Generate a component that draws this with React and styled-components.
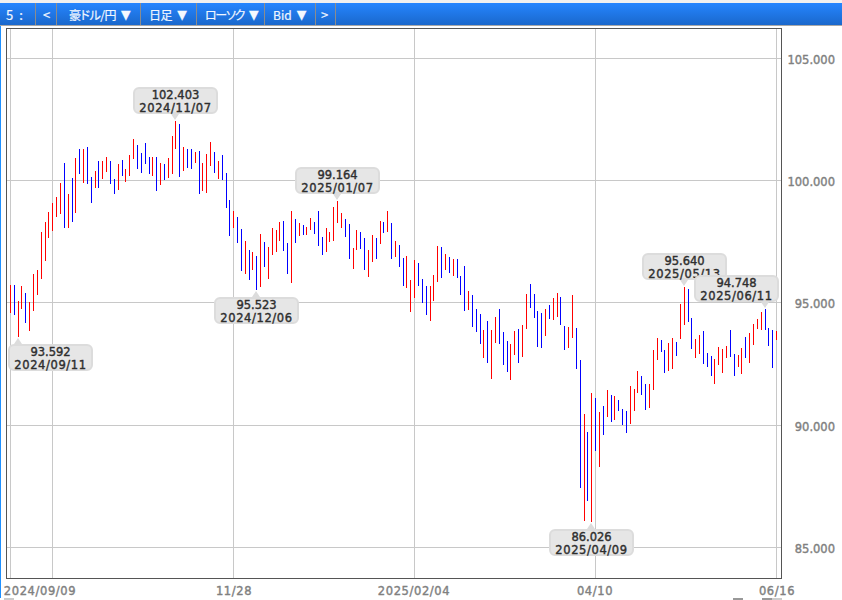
import React from "react";
import styled, { createGlobalStyle } from "styled-components";

const GlobalStyle = createGlobalStyle`
  html, body {
    margin: 0;
    padding: 0;
    background: #fff;
    overflow: hidden;
  }
`;

// x, high (top px), low (bottom px), r/b
const bars = [
  [10,285,313,"r"],[14,285,315,"b"],[18,301,337,"r"],[21,286,309,"r"],[25,293,323,"b"],[29,302,331,"r"],
  [33,274,311,"r"],[37,270,295,"r"],[41,232,279,"r"],[45,222,261,"r"],[48,212,238,"r"],[52,203,231,"r"],
  [56,197,217,"r"],[60,183,214,"r"],[64,163,228,"b"],[68,194,228,"r"],[72,178,222,"b"],[75,158,213,"r"],
  [79,149,174,"b"],[83,149,183,"r"],[87,147,184,"b"],[91,177,203,"b"],[95,171,188,"r"],[98,161,188,"b"],
  [102,161,179,"r"],[106,157,172,"r"],[110,161,184,"b"],[114,179,194,"b"],[118,164,190,"r"],[122,160,176,"b"],
  [125,169,182,"r"],[129,155,176,"r"],[133,139,159,"r"],[137,145,169,"b"],[141,153,173,"b"],[145,143,164,"b"],
  [149,157,174,"b"],[152,157,176,"r"],[156,157,191,"b"],[160,163,185,"r"],[164,164,180,"b"],[168,158,178,"r"],
  [172,136,174,"r"],[175,121,149,"r"],[179,124,177,"b"],[183,147,171,"r"],[187,149,168,"b"],[191,149,169,"b"],
  [195,152,163,"r"],[199,151,194,"b"],[202,163,191,"r"],[206,154,193,"r"],[210,142,166,"r"],[214,152,173,"b"],
  [218,161,179,"r"],[222,155,180,"b"],[226,173,208,"b"],[229,200,236,"b"],[233,211,228,"r"],[237,217,243,"b"],
  [241,229,271,"b"],[245,241,274,"r"],[249,250,280,"b"],[252,252,270,"r"],[256,256,290,"b"],[260,234,287,"r"],
  [264,242,267,"b"],[268,247,279,"r"],[272,228,255,"r"],[276,230,252,"r"],[279,222,241,"r"],[283,221,251,"b"],
  [287,243,274,"b"],[291,211,283,"r"],[295,219,243,"b"],[299,223,236,"r"],[303,225,235,"b"],[306,227,235,"r"],
  [310,218,230,"r"],[314,222,234,"b"],[318,211,246,"b"],[322,237,255,"b"],[326,228,252,"r"],[329,232,242,"r"],
  [333,207,241,"r"],[337,201,223,"r"],[341,213,228,"r"],[345,219,237,"b"],[349,224,259,"b"],[353,248,269,"r"],
  [356,230,250,"r"],[360,232,249,"b"],[364,238,270,"b"],[368,250,277,"r"],[372,235,262,"r"],[376,238,259,"b"],
  [380,221,244,"r"],[383,222,233,"b"],[387,211,232,"r"],[391,223,259,"b"],[395,241,257,"r"],[399,245,267,"b"],
  [403,258,286,"b"],[406,256,288,"r"],[410,280,312,"r"],[414,260,298,"r"],[418,263,286,"b"],[422,279,303,"b"],
  [426,286,315,"b"],[430,286,321,"r"],[433,275,301,"r"],[437,246,282,"r"],[441,247,278,"b"],[445,254,270,"r"],
  [449,257,273,"b"],[453,259,276,"r"],[457,259,278,"b"],[460,276,295,"b"],[464,266,311,"b"],[468,291,310,"r"],
  [472,295,327,"b"],[476,309,332,"b"],[480,314,344,"b"],[483,330,358,"r"],[487,321,363,"b"],[491,330,379,"r"],
  [495,317,343,"r"],[499,309,344,"b"],[503,332,365,"b"],[507,341,372,"b"],[510,344,380,"r"],[514,331,355,"r"],
  [518,329,363,"b"],[522,325,357,"r"],[526,294,329,"r"],[530,284,308,"b"],[534,294,318,"b"],[537,311,347,"b"],
  [541,313,348,"b"],[545,309,336,"r"],[549,305,319,"b"],[553,298,320,"r"],[557,293,317,"r"],[560,297,325,"b"],
  [564,326,350,"b"],[568,327,348,"r"],[572,295,338,"r"],[576,328,369,"b"],[580,360,488,"b"],[584,414,521,"r"],
  [587,432,501,"b"],[591,393,522,"r"],[595,398,451,"b"],[599,412,467,"r"],[603,406,435,"b"],[607,390,417,"r"],
  [611,395,422,"b"],[614,396,420,"r"],[618,400,411,"b"],[622,409,425,"b"],[626,411,433,"b"],[630,386,424,"r"],
  [634,389,411,"r"],[637,371,393,"r"],[641,376,395,"b"],[645,384,410,"b"],[649,384,408,"r"],[653,350,390,"r"],
  [657,338,360,"r"],[661,340,352,"b"],[664,350,373,"b"],[668,343,371,"r"],[672,338,369,"r"],[676,342,356,"b"],
  [680,304,339,"r"],[684,287,325,"r"],[688,289,322,"b"],[691,318,349,"b"],[695,339,358,"r"],[699,335,354,"r"],
  [703,331,364,"b"],[707,353,367,"b"],[711,356,376,"b"],[714,359,384,"r"],[718,347,365,"r"],[722,349,373,"r"],
  [726,346,358,"r"],[730,330,357,"b"],[734,354,376,"b"],[738,355,367,"r"],[741,348,374,"r"],[745,337,358,"b"],
  [749,333,363,"r"],[753,324,345,"r"],[757,319,329,"r"],[761,312,330,"r"],[765,309,330,"b"],[768,328,346,"b"],
  [772,330,368,"b"],[776,331,340,"r"],
];

const gridX = [10, 52, 233, 414, 595, 776];
const priceTicks = [
  { y: 58, label: "105.000" },
  { y: 180, label: "100.000" },
  { y: 302, label: "95.000" },
  { y: 425, label: "90.000" },
  { y: 547, label: "85.000" },
];
const dateTicks = [
  { x: 40, label: "2024/09/09" },
  { x: 234, label: "11/28" },
  { x: 414, label: "2025/02/04" },
  { x: 595, label: "04/10" },
  { x: 777, label: "06/16" },
];
const callouts = [
  { x: 133, y: 87, tip: 42, dir: "down", price: "102.403", date: "2024/11/07" },
  { x: 8, y: 344, tip: 10, dir: "up", price: "93.592", date: "2024/09/11" },
  { x: 214, y: 297, tip: 42, dir: "up", price: "95.523", date: "2024/12/06" },
  { x: 295, y: 167, tip: 42, dir: "down", price: "99.164", date: "2025/01/07" },
  { x: 549, y: 529, tip: 42, dir: "up", price: "86.026", date: "2025/04/09" },
  { x: 642, y: 253, tip: 42, dir: "down", price: "95.640", date: "2025/05/13" },
  { x: 694, y: 275, tip: 71, dir: "down", price: "94.748", date: "2025/06/11" },
];
const menu = [
  { w: 36, text: "5 :", pad: 6, track: 1.6, size: 13 },
  { w: 21, text: "<", pad: 7, size: 13 },
  { w: 84, text: "豪ドル/円", caret: true, pad: 12, track: -0.5 },
  { w: 56, text: "日足", caret: true, pad: 8, track: -0.4 },
  { w: 68, text: "ローソク", caret: true, pad: 8, track: -1.3 },
  { w: 51, text: "Bid", caret: true, pad: 8 },
  { w: 20, text: ">", pad: 5, size: 13 },
];

const Page = styled.div`
  width: 842px;
  height: 600px;
  overflow: hidden;
  padding-top: 3px;
  box-sizing: border-box;
  background: linear-gradient(#f0f0f0 3px, #fff 3px);
`;

const Toolbar = styled.div`
  display: flex;
  height: 22px;
  background: linear-gradient(#2585ff, #1a68cc);
  border-bottom: 1px solid #a8a8a8;
`;

const MenuCell = styled.div`
  display: flex;
  align-items: center;
  gap: 5px;
  box-sizing: border-box;
  width: ${(p) => p.$w}px;
  padding-left: ${(p) => p.$pad}px;
  border-right: 1px solid #8c8c8c;
  color: #f0f6ff;
  font: ${(p) => p.$size || 12}px "Noto Sans CJK JP", "Noto Sans", sans-serif;
  font-feature-settings: "palt";
  letter-spacing: ${(p) => p.$track || 0}px;
  -webkit-text-stroke: 0.2px #f0f6ff;
  white-space: nowrap;
`;

const Caret = styled.span`
  font: 12.5px "DejaVu Sans", sans-serif;
  letter-spacing: 0;
  color: #f4f8ff;
`;

const ChartArea = styled.div`
  position: relative;
  height: 572px;
  border-left: 1px solid #1e90ff;
`;

const ChartSvg = styled.svg`
  display: block;
`;

const AxisText = styled.text`
  font: 11.5px "DejaVu Sans", sans-serif;
  letter-spacing: ${(p) => (p.$date ? "0.6px" : "0")};
  fill: #808080;
  stroke: #808080;
  stroke-width: 0.4px;
`;

const Callout = styled.div`
  position: absolute;
  left: ${(p) => p.$x - 1}px;
  top: ${(p) => p.$y - 26}px;
  box-sizing: border-box;
  width: 85px;
  height: 27px;
  padding-top: 2px;
  display: flex;
  flex-direction: column;
  align-items: center;
  justify-content: center;
  background: #e6e6e6;
  border: 2px solid #dcdcdc;
  border-radius: 6px;
  color: #2e2e2e;
  font: 11.5px/12.5px "DejaVu Sans", sans-serif;
  -webkit-text-stroke: 0.4px #2e2e2e;

  &::after {
    content: "";
    position: absolute;
    left: ${(p) => p.$tip - 6}px;
    ${(p) => (p.$dir === "down" ? "top: 25px;" : "bottom: 25px;")}
    border-left: 4px solid transparent;
    border-right: 4px solid transparent;
    ${(p) =>
      p.$dir === "down"
        ? "border-top: 6px solid #dcdcdc;"
        : "border-bottom: 6px solid #dcdcdc;"}
  }
`;

const CalloutDate = styled.span`
  letter-spacing: 0.6px;
  white-space: nowrap;
`;

const FooterMarks = styled.div`
  display: flex;
  height: 2px;
  padding: 0 60px 0 4px;
`;

const Mark = styled.div`
  width: 10px;
  margin-left: ${(p) => p.$gap || 0}px;
  background: ${(p) => p.$tone};
`;

const PriceChart = () => (
  <ChartSvg width="841" height="572" viewBox="1 26 841 572">
    {priceTicks.map((t) => (
      <line key={t.y} x1="7" x2="782" y1={t.y + 0.5} y2={t.y + 0.5} stroke="#c8c8c8" />
    ))}
    {gridX.map((x) => (
      <line key={x} x1={x + 0.5} x2={x + 0.5} y1="29" y2="578" stroke="#c8c8c8" />
    ))}
    <rect x="6.5" y="28.5" width="775" height="550" fill="none" stroke="#555" />
    {bars.map(([x, top, bottom, dir]) => (
      <line
        key={x}
        x1={x + 0.5}
        x2={x + 0.5}
        y1={top}
        y2={bottom}
        stroke={dir === "r" ? "#ff0000" : "#0000ff"}
      />
    ))}
    {priceTicks.map((t) => (
      <AxisText key={t.label} x="835" y={t.y + 5.5} textAnchor="end">
        {t.label}
      </AxisText>
    ))}
    {dateTicks.map((t) => (
      <AxisText key={t.label} $date x={t.x} y="594.5" textAnchor="middle">
        {t.label}
      </AxisText>
    ))}
  </ChartSvg>
);

const App = () => (
  <Page>
    <GlobalStyle />
    <Toolbar>
      {menu.map((m) => (
        <MenuCell key={m.text} $w={m.w} $pad={m.pad} $track={m.track} $size={m.size}>
          {m.text}
          {m.caret && <Caret>▼</Caret>}
        </MenuCell>
      ))}
    </Toolbar>
    <ChartArea>
      <PriceChart />
      {callouts.map((c) => (
        <Callout key={c.date} $x={c.x} $y={c.y} $tip={c.tip} $dir={c.dir}>
          <span>{c.price}</span>
          <CalloutDate>{c.date}</CalloutDate>
        </Callout>
      ))}
    </ChartArea>
    <FooterMarks>
      <Mark $tone="#cccccc" />
      <Mark $tone="#999999" $gap={719} />
      <Mark $tone="#999999" $gap={19} />
      <Mark $tone="#cccccc" />
    </FooterMarks>
  </Page>
);

export default App;
